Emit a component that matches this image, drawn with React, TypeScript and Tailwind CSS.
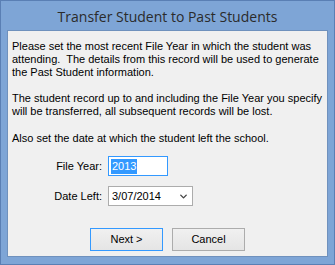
import { ChevronDown } from "lucide-react";

const body = { fontFamily: '"Liberation Sans", Arial, sans-serif' };

export default function App() {
  return (
    <div className="w-[335px] h-[265px] bg-[#7ea5d6] border border-[#5a7fb4] flex flex-col px-[6px] pb-[7px]">
      {/* Title bar */}
      <div
        className="h-[29px] flex items-center justify-center text-[14px] text-[#2b2b2b] pt-[1px]"
        style={{ fontFamily: '"Open Sans", "Noto Sans", sans-serif' }}
      >
        Transfer Student to Past Students
      </div>

      {/* Client area */}
      <div
        className="flex-1 bg-[#f0f0f0] border border-[#6f91bd] text-[11px] leading-[13px] text-black px-[4px] pt-[9px] flex flex-col"
        style={body}
      >
        <p>
          Please set the most recent File Year in which the student was
          attending.&nbsp; The details from this record will be used to
          generate the Past Student information.
        </p>
        <p className="mt-[13px]">
          The student record up to and including the File Year you specify
          will be transferred, all subsequent records will be lost.
        </p>
        <p className="mt-[14px]">
          Also set the date at which the student left the school.
        </p>

        {/* Fields */}
        <div className="mt-[11px] grid grid-cols-[90px_auto] gap-x-[6px] gap-y-[10px] items-center">
          <span className="text-right">File Year:</span>
          <div className="w-[60px] h-[20px] border border-[#3399ff] bg-white flex items-center px-[2px]">
            <span className="bg-[#3399ff] text-white px-[1px] leading-[15px]">2013</span>
          </div>
          <span className="text-right">Date Left:</span>
          <div className="w-[85px] h-[20px] border border-[#acacac] bg-white flex items-center justify-between pl-[3px] pr-[3px]">
            <span>3/07/2014</span>
            <ChevronDown className="w-[11px] h-[11px] text-[#444]" strokeWidth={3} />
          </div>
        </div>

        {/* Buttons */}
        <div className="mt-[22px] flex justify-center gap-[9px]">
          <button className="w-[73px] h-[23px] border border-[#3399ff] bg-gradient-to-b from-[#f0f0f0] to-[#e5e5e5] text-[11px]">
            Next &gt;
          </button>
          <button className="w-[73px] h-[23px] border border-[#acacac] bg-gradient-to-b from-[#f0f0f0] to-[#e5e5e5] text-[11px]">
            Cancel
          </button>
        </div>
      </div>
    </div>
  );
}
